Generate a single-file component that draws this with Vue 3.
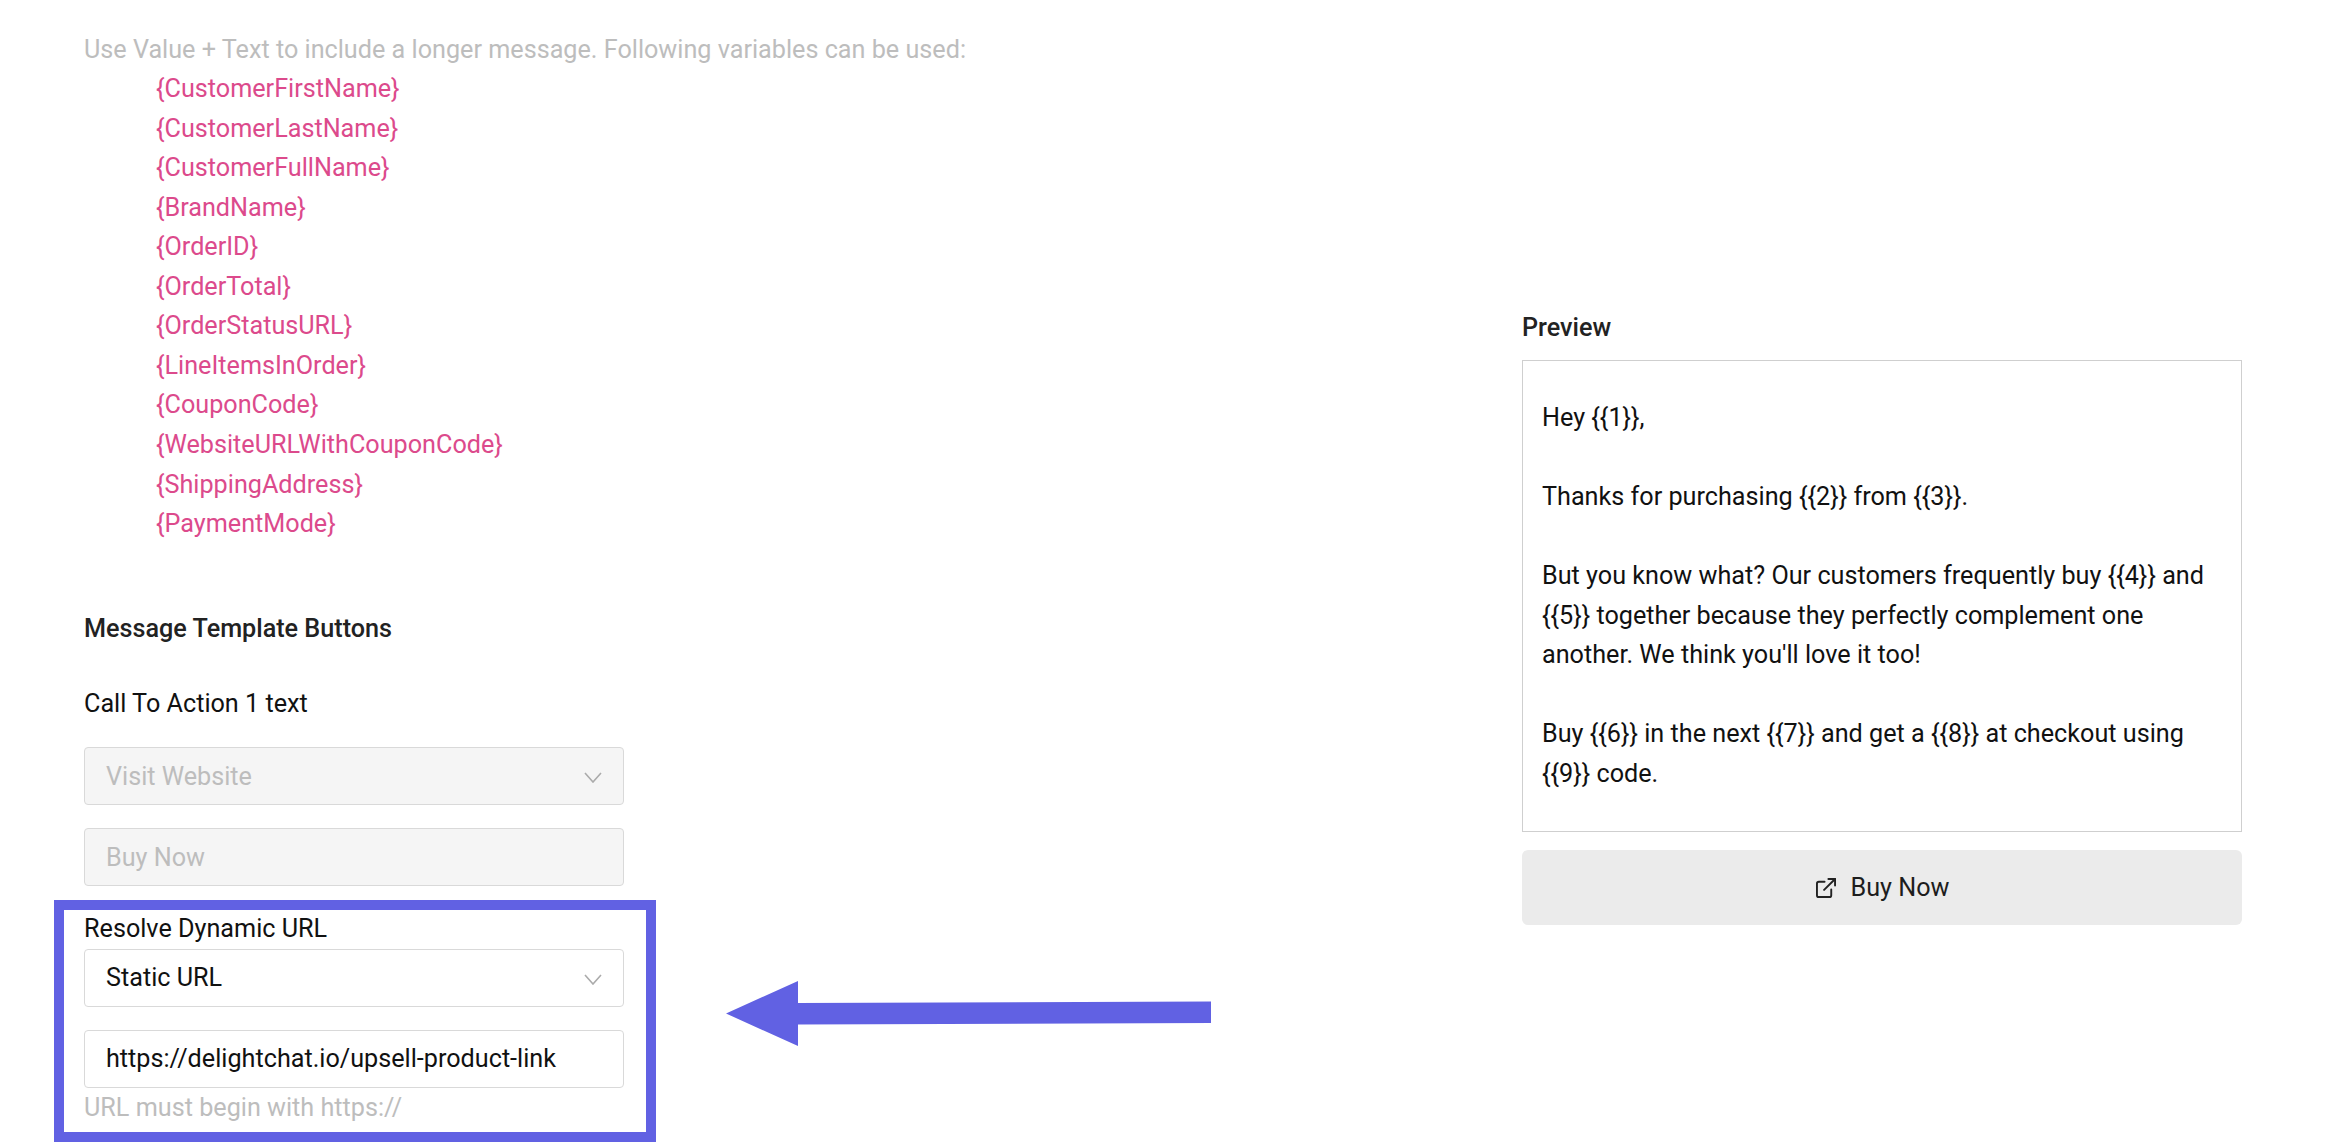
<script setup>
const variables = [
  '{CustomerFirstName}', '{CustomerLastName}', '{CustomerFullName}', '{BrandName}',
  '{OrderID}', '{OrderTotal}', '{OrderStatusURL}', '{LineItemsInOrder}',
  '{CouponCode}', '{WebsiteURLWithCouponCode}', '{ShippingAddress}', '{PaymentMode}'
]
const paragraphs = [
  'Hey {{1}},',
  'Thanks for purchasing {{2}} from {{3}}.',
  "But you know what? Our customers frequently buy {{4}} and {{5}} together because they perfectly complement one another. We think you'll love it too!",
  'Buy {{6}} in the next {{7}} and get a {{8}} at checkout using {{9}} code.'
]
</script>

<template>
  <div class="page">
    <section class="left">
      <p class="hint">Use Value + Text to include a longer message. Following variables can be used:</p>
      <ul class="vars">
        <li v-for="v in variables" :key="v">{{ v }}</li>
      </ul>
      <h3 class="heading">Message Template Buttons</h3>
      <label class="label cta">Call To Action 1 text</label>
      <div class="field disabled select">
        <span>Visit Website</span>
        <svg class="chev" width="18" height="11" viewBox="0 0 18 11"><path d="M1 1l8 9 8-9" /></svg>
      </div>
      <div class="field disabled second"><span>Buy Now</span></div>
      <label class="label resolve">Resolve Dynamic URL</label>
      <div class="field select">
        <span>Static URL</span>
        <svg class="chev" width="18" height="11" viewBox="0 0 18 11"><path d="M1 1l8 9 8-9" /></svg>
      </div>
      <div class="field url"><span>https://delightchat.io/upsell-product-link</span></div>
      <p class="hint help">URL must begin with https://</p>
    </section>

    <section class="right">
      <h3 class="preview-title">Preview</h3>
      <div class="preview">
        <p v-for="(text, i) in paragraphs" :key="i">{{ text }}</p>
      </div>
      <div class="cta-btn">
        <svg width="20" height="20" viewBox="0 0 21 21" fill="none" stroke="#222" stroke-width="2" stroke-linecap="round" stroke-linejoin="round">
          <path d="M9 4H3a2 2 0 0 0-2 2v12a2 2 0 0 0 2 2h11a2 2 0 0 0 2-2v-6" />
          <path d="M13 1h7v7" />
          <path d="M20 1L8.500 12.500" />
        </svg>
        <span>Buy Now</span>
      </div>
    </section>

    <div class="highlight"></div>
    <svg class="arrow" width="486" height="66" viewBox="0 0 486 66">
      <polygon points="0,32.500 72,0 72,22 485,20.500 485,42 72,43.500 72,65" />
    </svg>
  </div>
</template>

<style>
html, body { margin: 0; background: #fff; overflow: hidden; }
</style>

<style scoped>
.page {
  position: relative;
  display: flex;
  width: 2328px;
  height: 1148px;
  overflow: hidden;
  font-family: Roboto, "Liberation Sans", sans-serif;
  font-size: 25.2px;
  line-height: 39.6px;
  color: #111;
  background: #fff;
}
p, ul, h3 { margin: 0; padding: 0; }
.left {
  width: 540px;
  margin-left: 84px;
  padding-top: 29.5px;
}
.hint { color: #bdbdbd; white-space: nowrap; }
.vars {
  list-style: none;
  margin-left: 72px;
  line-height: 39.55px;
  color: #dc4a8c;
}
.heading {
  margin-top: 65.6px;
  font-size: 25.2px;
  font-weight: 500;
  color: #222;
}
.label { display: block; color: #111; }
.cta { margin-top: 35px; }
.field {
  box-sizing: border-box;
  display: flex;
  align-items: center;
  justify-content: space-between;
  height: 58px;
  padding: 0 21px 0 21px;
  background: #fff;
  border: 1px solid #d9d9d9;
  border-radius: 4px;
}
.cta + .field { margin-top: 24px; }
.disabled {
  background: #f5f5f5;
  color: #bdbdbd;
}
.second { margin-top: 23px; }
.resolve { margin-top: 23px; }
.resolve + .field { margin-top: 0; }
.url { margin-top: 23px; }
.help { margin-top: 0; }
.chev { margin-top: 2px; }
.chev path {
  fill: none;
  stroke: #ababab;
  stroke-width: 1.6;
}
.right {
  width: 720px;
  margin-left: 898px;
  padding-top: 308px;
}
.preview-title {
  font-size: 25.2px;
  font-weight: 500;
  color: #222;
  margin-bottom: 12px;
}
.preview {
  box-sizing: border-box;
  height: 472px;
  padding: 37px 19px;
  border: 1px solid #cfcfcf;
  color: #111;
}
.preview p + p { margin-top: 39.6px; }
.cta-btn {
  box-sizing: border-box;
  display: flex;
  align-items: center;
  justify-content: center;
  gap: 14px;
  height: 75px;
  margin-top: 18px;
  padding: 2px 0 0 2px;
  background: #ebebeb;
  border-radius: 6px;
  color: #1d1d1d;
}
.highlight {
  position: absolute;
  left: 54px;
  top: 900px;
  width: 602px;
  height: 242px;
  box-sizing: border-box;
  border: 10px solid #6161e3;
  pointer-events: none;
}
.arrow {
  position: absolute;
  left: 726px;
  top: 981px;
}
.arrow polygon { fill: #6161e3; }
</style>
